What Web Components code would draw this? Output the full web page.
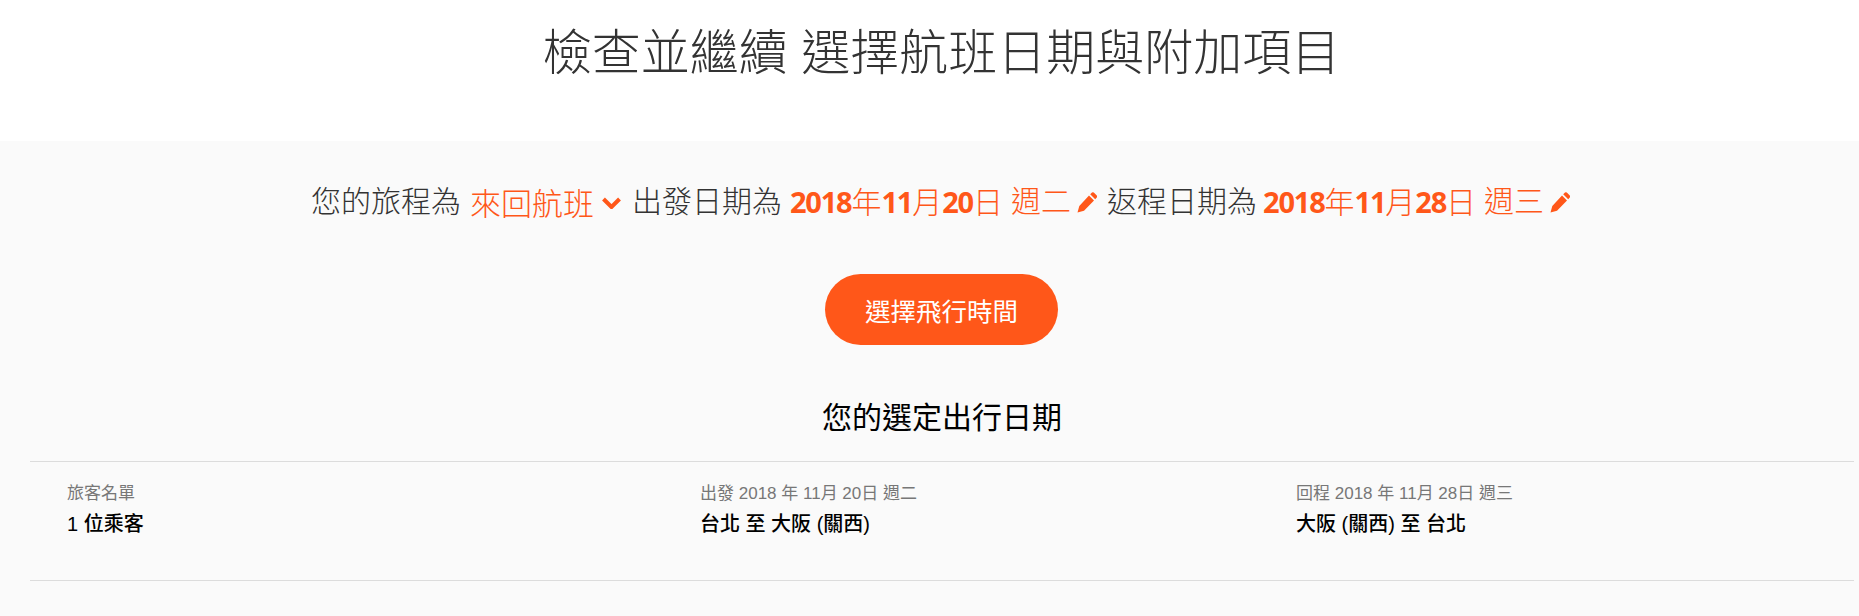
<!DOCTYPE html>
<html lang="zh-Hant">
<head>
<meta charset="utf-8">
<title>選擇航班日期</title>
<style>
    html, body {
        margin: 0;
        padding: 0;
        background: #fff;
        font-family: "Liberation Sans", "Noto Sans CJK TC", sans-serif;
    }
</style>
</head>
<body>
<booking-page>
    <page-title>檢查並繼續 選擇航班日期與附加項目</page-title>
    <date-panel>
        <trip-summary></trip-summary>
        <orange-button>選擇飛行時間</orange-button>
        <selected-dates></selected-dates>
    </date-panel>
</booking-page>

<script>
const FONT = `"Liberation Sans", "Noto Sans CJK TC", sans-serif`;
const PENCIL = `<svg class="pencil" viewBox="0 0 20 21" width="20" height="21"><path fill="currentColor" d="M.5 20.5L2.3 14 12 3.5l5 5L7 18.8zM13.2 2.3L15 .6q.9-.7 1.8 0l3 3q.7.9 0 1.8l-1.600 1.900z"/></svg>`;

class BookingPage extends HTMLElement {
    constructor() {
        super();
        this.shadowDOM = this.attachShadow({mode: "open"});
        this.shadowDOM.innerHTML = `
            <style>
                :host {
                    display: flex;
                    flex-direction: column;
                    height: 616px;
                    overflow: hidden;
                    font-family: ${FONT};
                }
            </style>
            <slot></slot>
        `;
    }
}

class PageTitle extends HTMLElement {
    constructor() {
        super();
        this.shadowDOM = this.attachShadow({mode: "open"});
        this.shadowDOM.innerHTML = `
            <style>
                :host {
                    display: block;
                    height: 141px;
                    padding: 20px 0 0 24px;
                    box-sizing: border-box;
                    text-align: center;
                    font-size: 49px;
                    line-height: 66px;
                    font-weight: 300;
                    color: #333;
                }
            </style>
            <slot></slot>
        `;
    }
}

class DatePanel extends HTMLElement {
    constructor() {
        super();
        this.shadowDOM = this.attachShadow({mode: "open"});
        this.shadowDOM.innerHTML = `
            <style>
                :host {
                    display: flex;
                    flex-direction: column;
                    align-items: center;
                    flex: 1;
                    padding-left: 24px;
                    background: #fafafa;
                }
            </style>
            <slot></slot>
        `;
    }
}

class TripSummary extends HTMLElement {
    constructor() {
        super();
        this.shadowDOM = this.attachShadow({mode: "open"});
        this.shadowDOM.innerHTML = `
            <style>
                :host {
                    display: flex;
                    align-items: center;
                    justify-content: center;
                    gap: 8px;
                    margin-top: 41px;
                    height: 40px;
                    font-size: 30px;
                    line-height: 40px;
                    font-weight: 300;
                    color: #333;
                    white-space: nowrap;
                }
                .orange {
                    color: #ff5719;
                    display: flex;
                    align-items: center;
                }
                .trip {
                    margin-left: 1px;
                    margin-right: 3px;
                    padding-top: 6px;
                    font-size: 31px;
                }
                .back {
                    margin-right: -2px;
                }
                b {
                    font-family: "Open Sans", sans-serif;
                    font-size: 29px;
                    font-weight: 700;
                    letter-spacing: -1.2px;
                }
                .chevron {
                    margin-left: 8px;
                    margin-top: -5px;
                }
                .pencil {
                    margin-left: 6px;
                    margin-right: 2px;
                }
                .weekday {
                    margin-left: 8px;
                }
            </style>
            <span>您的旅程為</span>
            <span class="orange trip">來回航班<svg class="chevron" viewBox="0 0 19 12" width="19" height="12"><path fill="none" stroke="currentColor" stroke-width="4" d="M1.500 2l8 8 8-8"/></svg></span>
            <span>出發日期為</span>
            <span class="orange"><span><b>2018</b>年<b>11</b>月<b>20</b>日</span><span class="weekday">週二</span>${PENCIL}</span>
            <span class="back">返程日期為</span>
            <span class="orange"><span><b>2018</b>年<b>11</b>月<b>28</b>日</span><span class="weekday">週三</span>${PENCIL}</span>
        `;
    }
}

class OrangeButton extends HTMLElement {
    constructor() {
        super();
        this.shadowDOM = this.attachShadow({mode: "open"});
        this.shadowDOM.innerHTML = `
            <style>
                :host {
                    display: flex;
                    align-items: center;
                    justify-content: center;
                    width: 233px;
                    height: 71px;
                    margin-top: 52px;
                    border-radius: 36px;
                    background: #ff5719;
                    color: #fff;
                    font-size: 25.5px;
                    font-weight: 400;
                }
            </style>
            <slot></slot>
        `;
    }
}

class SelectedDates extends HTMLElement {
    constructor() {
        super();
        this.shadowDOM = this.attachShadow({mode: "open"});
        this.shadowDOM.innerHTML = `
            <style>
                :host {
                    display: block;
                    align-self: stretch;
                    margin: 0 5px 0 6px;
                }
                h2 {
                    margin: 53px 0 23px;
                    text-align: center;
                    font-size: 30px;
                    line-height: 40px;
                    font-weight: 400;
                    color: #000;
                }
                .row {
                    display: grid;
                    grid-template-columns: 633px 596px 1fr;
                    height: 120px;
                    box-sizing: border-box;
                    padding: 20px 0 0 37px;
                    border-top: 1px solid #dcdcdc;
                    border-bottom: 1px solid #dcdcdc;
                }
                .label {
                    font-size: 17px;
                    line-height: 24px;
                    color: #777;
                    white-space: pre;
                }
                .value {
                    margin-top: 4px;
                    font-size: 20px;
                    line-height: 28px;
                    font-weight: 500;
                    color: #000;
                }
            </style>
            <h2>您的選定出行日期</h2>
            <div class="row">
                <div>
                    <div class="label">旅客名單</div>
                    <div class="value">1 位乘客</div>
                </div>
                <div>
                    <div class="label">出發 2018 年 11月 20日 週二</div>
                    <div class="value">台北 至 大阪 (關西)</div>
                </div>
                <div>
                    <div class="label">回程 2018 年 11月 28日 週三</div>
                    <div class="value">大阪 (關西) 至 台北</div>
                </div>
            </div>
        `;
    }
}

customElements.define("booking-page", BookingPage);
customElements.define("page-title", PageTitle);
customElements.define("date-panel", DatePanel);
customElements.define("trip-summary", TripSummary);
customElements.define("orange-button", OrangeButton);
customElements.define("selected-dates", SelectedDates);
</script>
</body>
</html>
